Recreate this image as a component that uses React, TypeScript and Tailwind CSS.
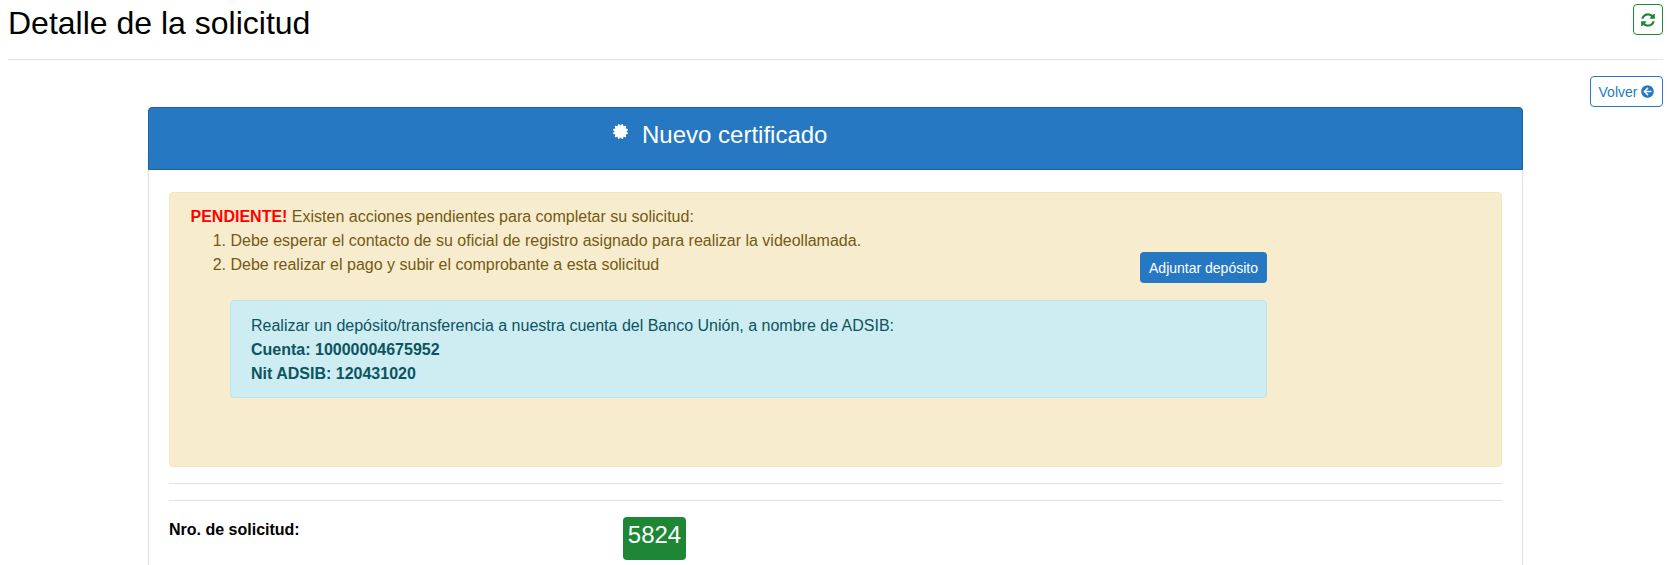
import { FaArrowCircleLeft, FaCertificate } from 'react-icons/fa';

// Detalle de la solicitud

function RefreshIcon() {
  return (
    <svg viewBox="0 0 1792 1792" className="h-4 w-4" fill="currentColor">
      <path d="M1639 1056q0 5-1 7-64 268-268 434.5t-478 166.5q-146 0-282.5-55t-243.500-157l-129 129q-19 19-45 19t-45-19-19-45v-448q0-26 19-45t45-19h448q26 0 45 19t19 45-19 45l-137 137q71 66 161 102t187 36q134 0 250-65t186-179q11-17 53-117 8-23 30-23h192q13 0 22.500 9.500t9.500 22.500zm25-800v448q0 26-19 45t-45 19h-448q-26 0-45-19t-19-45 19-45l138-138q-148-137-349-137-134 0-250 65t-186 179q-11 17-53 117-8 23-30 23h-199q-13 0-22.500-9.500t-9.500-22.500v-7q65-268 270-434.500t480-166.500q146 0 284 55.500t245 156.500l130-129q19-19 45-19t45 19 19 45z" />
    </svg>
  );
}

export default function App() {
  return (
    <div className="h-[565px] overflow-hidden bg-white pr-1 pl-2 font-['Liberation_Sans',Arial,sans-serif] text-base text-black">
      {/* Encabezado */}
      <div className="flex h-[60px] items-start justify-between border-b border-[#e2e2e2]">
        <h1 className="mt-1 text-[32px] leading-[38px] font-normal">Detalle de la solicitud</h1>
        <button className="mt-1 flex h-[31px] w-[30px] items-center justify-center rounded border border-[#1e8735] text-[#1e8735]">
          <RefreshIcon />
        </button>
      </div>

      <div className="mt-4 flex justify-end">
        <button className="flex h-[31px] w-[73px] items-center justify-center gap-1 rounded border border-[#2678c2] text-sm text-[#2678c2]">
          Volver <FaArrowCircleLeft className="h-[13px] w-[13px]" />
        </button>
      </div>

      {/* Tarjeta */}
      <div className="mr-[140px] ml-[140px] h-[600px] rounded border border-[#dfdfdf]">
        <div className="-mx-px -mt-px flex h-[63px] items-start rounded-t border border-[#1d5f9b] bg-[#2678c2] pl-[464px] text-white">
          <FaCertificate className="mt-[16px] h-[15px] w-[15px]" />
          <span className="mt-[13px] ml-[14px] text-2xl leading-7">Nuevo certificado</span>
        </div>

        <div className="px-5 pt-[22px]">
          {/* Alerta pendiente */}
          <div className="h-[275px] rounded border border-[#f5e6b9] bg-[#f8eccf] pt-3 pr-[234px] pl-[20.5px] leading-6 text-[#725b12]">
            <p>
              <b className="text-[#ff0000]">PENDIENTE!</b> Existen acciones pendientes para completar su solicitud:
            </p>
            <ol className="list-decimal pl-10">
              <li>Debe esperar el contacto de su oficial de registro asignado para realizar la videollamada.</li>
              <li className="relative">
                Debe realizar el pago y subir el comprobante a esta solicitud
                <button className="absolute -top-px right-0 h-[31px] w-[127px] rounded-sm bg-[#2678c2] text-sm text-white">
                  Adjuntar depósito
                </button>
              </li>
            </ol>
            <div className="mt-[23px] ml-[39.5px] h-[98px] rounded border border-[#b9e5ec] bg-[#cdedf2] px-5 pt-[13px] text-[#0c5460]">
              <p>Realizar un depósito/transferencia a nuestra cuenta del Banco Unión, a nombre de ADSIB:</p>
              <p className="font-bold">Cuenta: 10000004675952</p>
              <p className="font-bold">Nit ADSIB: 120431020</p>
            </div>
          </div>

          <hr className="mt-[16px] border-[#e2e2e2]" />
          <hr className="mt-4 border-[#e2e2e2]" />

          {/* Datos */}
          <div className="mt-4 flex items-start">
            <span className="mt-px w-[454px] font-bold">Nro. de solicitud:</span>
            <span className="flex h-[43px] w-[63px] justify-center rounded bg-[#1e8735] pt-1 text-2xl leading-7 text-white">
              5824
            </span>
          </div>
        </div>
      </div>
    </div>
  );
}
